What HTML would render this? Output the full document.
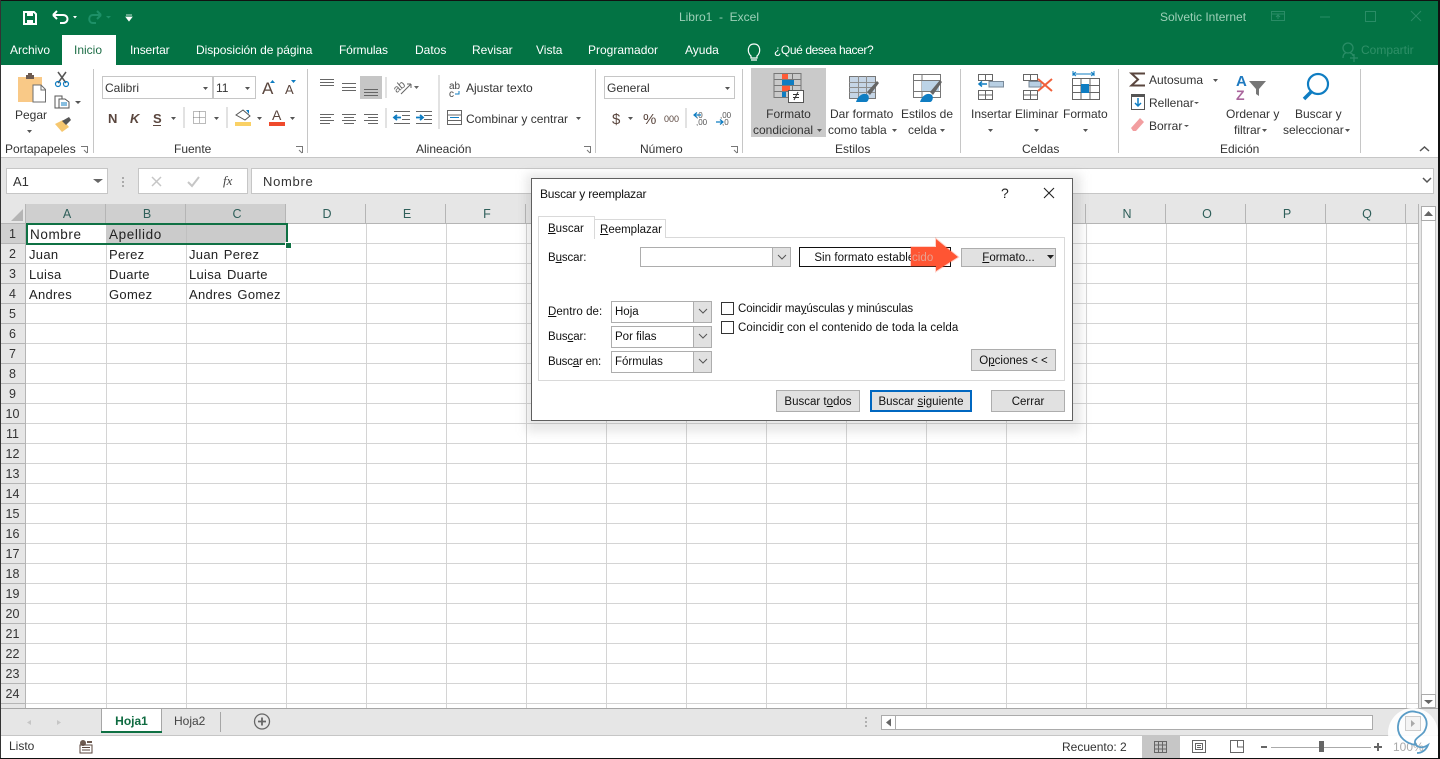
<!DOCTYPE html>
<html lang="es"><head><meta charset="utf-8"><title>Libro1 - Excel</title>
<style>
html,body{margin:0;padding:0;background:#fff}
#p{position:relative;width:1440px;height:759px;overflow:hidden;background:#fff;font-family:"Liberation Sans",sans-serif;font-size:12px;color:#333;letter-spacing:0}
#p div,#p span.t{position:absolute;box-sizing:border-box}
.t{position:absolute;white-space:nowrap;line-height:16px}
.w{color:#fff}
.c{text-align:center}
.r{left:0;width:26px;height:20px;line-height:21px;text-align:center;color:#333;font-size:12.5px;background:#e6e6e6;border-bottom:1px solid #b5b5b5;border-right:1px solid #b5b5b5}
.h{top:204px;height:20px;line-height:20px;text-align:center;padding-left:3px;color:#2f5f5a;font-size:12.5px;background:#e6e6e6;border-right:1px solid #b5b5b5;border-bottom:1px solid #b5b5b5}
.cell{position:absolute;white-space:nowrap;font-size:13px;line-height:22px;color:#222;letter-spacing:.3px;word-spacing:1.5px}
.big{font-size:13.5px;letter-spacing:.6px}
.box{background:#fff;border:1px solid #c6c6c6}
.btn{background:#e1e1e1;border:1px solid #adadad;text-align:center;color:#111;line-height:22px;font-size:11.5px;white-space:nowrap;letter-spacing:0}
.sel{background:#fff;border:1px solid #adadad;font-size:11.5px;color:#111;line-height:19px;padding-left:3px;letter-spacing:0}
.sel i{position:absolute;right:0;top:0;bottom:0;width:17px;background:#e1e1e1;border-left:1px solid #adadad}
.sel svg{position:absolute;right:3px;top:6px}
.d{font-size:11.5px;color:#111;letter-spacing:.05px}
u{text-decoration:underline}
.sep{background:#c6c6c6;width:1px;top:69px;height:84px}
.lb{color:#333;top:141px}
</style></head><body><div id="p">
<!-- green header -->
<div style="left:0;top:0;width:1440px;height:65px;background:#037344"></div>
<div style="left:62px;top:35px;width:54px;height:30px;background:#fff"></div>
<span class="t" style="left:549px;width:340px;text-align:center;top:9px;color:#9ed0b8;display:block">Libro1 &nbsp;-&nbsp; Excel</span>
<span class="t" style="left:1160px;top:9px;color:#9ed0b8">Solvetic Internet</span>
<span class="t w" style="left:10px;top:42px">Archivo</span>
<span class="t" style="left:74px;top:42px;color:#1e6e47">Inicio</span>
<span class="t w" style="left:130px;top:42px;letter-spacing:-.15px">Insertar</span>
<span class="t w" style="left:196px;top:42px;letter-spacing:-.05px">Disposición de página</span>
<span class="t w" style="left:339px;top:42px;letter-spacing:-.15px">Fórmulas</span>
<span class="t w" style="left:415px;top:42px;">Datos</span>
<span class="t w" style="left:472px;top:42px">Revisar</span>
<span class="t w" style="left:536px;top:42px">Vista</span>
<span class="t w" style="left:588px;top:42px">Programador</span>
<span class="t w" style="left:685px;top:42px">Ayuda</span>
<span class="t w" style="left:774px;top:42px;letter-spacing:-.4px">¿Qué desea hacer?</span>
<span class="t" style="left:1361px;top:42px;color:#2f9068">Compartir</span>

<!-- ribbon -->
<div style="left:0;top:65px;width:1440px;height:92px;background:#fff"></div>
<div style="left:0;top:157px;width:1440px;height:47px;background:#e6e6e6;border-top:1px solid #c6c6c6"></div>
<div class="sep" style="left:93px"></div><div class="sep" style="left:307px"></div><div class="sep" style="left:595px"></div><div class="sep" style="left:742px"></div><div class="sep" style="left:960px"></div><div class="sep" style="left:1118px"></div><div class="sep" style="left:1360px"></div>
<div style="left:751px;top:68px;width:75px;height:69px;background:#cacaca"></div>
<div style="left:360px;top:76px;width:22px;height:23px;background:#c6c6c6"></div>
<div class="box" style="left:102px;top:76px;width:111px;height:23px"></div>
<div class="box" style="left:213px;top:76px;width:43px;height:23px"></div>
<div class="box" style="left:604px;top:76px;width:131px;height:23px"></div>
<span class="t" style="left:105px;top:80px">Calibri</span>
<span class="t" style="left:216px;top:80px">11</span>
<span class="t" style="left:607px;top:80px">General</span>
<span class="t" style="left:15px;top:107px">Pegar</span>
<span class="t" style="left:466px;top:80px">Ajustar texto</span>
<span class="t" style="left:466px;top:111px">Combinar y centrar</span>
<span class="t c" style="left:751px;width:75px;top:106px">Formato</span>
<span class="t" style="left:753px;top:122px">condicional</span>
<span class="t" style="left:830px;top:106px">Dar formato</span>
<span class="t" style="left:828px;top:122px">como tabla</span>
<span class="t" style="left:901px;top:106px">Estilos de</span>
<span class="t" style="left:908px;top:122px">celda</span>
<span class="t" style="left:971px;top:106px">Insertar</span>
<span class="t" style="left:1015px;top:106px">Eliminar</span>
<span class="t" style="left:1063px;top:106px">Formato</span>
<span class="t" style="left:1149px;top:72px">Autosuma</span>
<span class="t" style="left:1149px;top:95px">Rellenar</span>
<span class="t" style="left:1149px;top:118px">Borrar</span>
<span class="t" style="left:1226px;top:106px">Ordenar y</span>
<span class="t" style="left:1234px;top:122px">filtrar</span>
<span class="t" style="left:1295px;top:106px">Buscar y</span>
<span class="t" style="left:1283px;top:122px">seleccionar</span>
<span class="t lb" style="left:5px">Portapapeles</span>
<span class="t lb" style="left:174px">Fuente</span>
<span class="t lb" style="left:416px">Alineación</span>
<span class="t lb" style="left:640px">Número</span>
<span class="t lb" style="left:835px">Estilos</span>
<span class="t lb" style="left:1022px">Celdas</span>
<span class="t lb" style="left:1220px">Edición</span>

<!-- formula bar -->
<div class="box" style="left:6px;top:168px;width:102px;height:26px"></div>
<span class="t" style="left:13px;top:174px;font-size:13px">A1</span>
<div class="box" style="left:138px;top:168px;width:110px;height:26px"></div>
<div class="box" style="left:251px;top:168px;width:1183px;height:26px"></div>
<span class="t" style="left:263px;top:174px;font-size:13px;letter-spacing:.7px">Nombre</span>
<span class="t" style="left:223px;top:173px;font:italic 13px 'Liberation Serif',serif;color:#444">fx</span>

<!-- sheet grid -->
<div style="left:26px;top:204px;width:1392px;height:504px;background-color:#fff;background-image:linear-gradient(#d4d4d4 1px,transparent 1px);background-size:100% 20px;background-position:0 19px"></div>
<svg style="position:absolute;left:0;top:0" width="1440" height="759"><g stroke="#d4d4d4" fill="none"><path d="M106.500 204V708M186.500 204V708M286.500 204V708M366.500 204V708M446.500 204V708M526.500 204V708M606.500 204V708M686.500 204V708M766.500 204V708M846.500 204V708M926.500 204V708M1006.500 204V708M1086.500 204V708M1166.500 204V708M1246.500 204V708M1326.500 204V708M1406.500 204V708"/></g></svg>
<div style="left:0;top:204px;width:26px;height:20px;background:#e6e6e6;border-right:1px solid #b5b5b5;border-bottom:1px solid #b5b5b5"></div>
<svg style="position:absolute;left:10px;top:208px" width="14" height="14"><path d="M13 1V13H1Z" fill="#b5b5b5"/></svg>
<div class="h" style="left:26px;width:80px;background:#cfcfcf">A</div>
<div class="h" style="left:106px;width:80px;background:#cfcfcf">B</div>
<div class="h" style="left:186px;width:100px;background:#cfcfcf">C</div>
<div class="h" style="left:286px;width:80px">D</div><div class="h" style="left:366px;width:80px">E</div><div class="h" style="left:446px;width:80px">F</div><div class="h" style="left:526px;width:80px">G</div><div class="h" style="left:606px;width:80px">H</div><div class="h" style="left:686px;width:80px">I</div><div class="h" style="left:766px;width:80px">J</div><div class="h" style="left:846px;width:80px">K</div><div class="h" style="left:926px;width:80px">L</div><div class="h" style="left:1006px;width:80px">M</div><div class="h" style="left:1086px;width:80px">N</div><div class="h" style="left:1166px;width:80px">O</div><div class="h" style="left:1246px;width:80px">P</div><div class="h" style="left:1326px;width:80px">Q</div>
<div style="left:1406px;top:204px;width:12px;height:20px;background:#e6e6e6;border-bottom:1px solid #b5b5b5"></div>
<div class="r" style="top:224px;background:#cfcfcf">1</div><div class="r" style="top:244px">2</div><div class="r" style="top:264px">3</div><div class="r" style="top:284px">4</div><div class="r" style="top:304px">5</div><div class="r" style="top:324px">6</div><div class="r" style="top:344px">7</div><div class="r" style="top:364px">8</div><div class="r" style="top:384px">9</div><div class="r" style="top:404px">10</div><div class="r" style="top:424px">11</div><div class="r" style="top:444px">12</div><div class="r" style="top:464px">13</div><div class="r" style="top:484px">14</div><div class="r" style="top:504px">15</div><div class="r" style="top:524px">16</div><div class="r" style="top:544px">17</div><div class="r" style="top:564px">18</div><div class="r" style="top:584px">19</div><div class="r" style="top:604px">20</div><div class="r" style="top:624px">21</div><div class="r" style="top:644px">22</div><div class="r" style="top:664px">23</div><div class="r" style="top:684px">24</div>
<div style="left:0;top:704px;width:26px;height:4px;background:#e6e6e6;border-right:1px solid #b5b5b5"></div>
<!-- selection -->
<div style="left:106px;top:224px;width:181px;height:19px;background:#cbcbcb"></div>
<div style="left:186px;top:224px;width:1px;height:19px;background:#c0c0c0"></div>
<div style="left:26px;top:223px;width:262px;height:22px;border:2px solid #0f7144"></div>
<div style="left:285px;top:242px;width:5px;height:5px;background:#0f7144;border:1px solid #fff;box-sizing:content-box"></div>
<span class="cell big" style="left:30px;top:224px">Nombre</span><span class="cell big" style="left:109px;top:224px">Apellido</span>
<span class="cell" style="left:29px;top:244px">Juan</span><span class="cell" style="left:109px;top:244px">Perez</span><span class="cell" style="left:189px;top:244px">Juan Perez</span>
<span class="cell" style="left:29px;top:264px">Luisa</span><span class="cell" style="left:109px;top:264px">Duarte</span><span class="cell" style="left:189px;top:264px">Luisa Duarte</span>
<span class="cell" style="left:29px;top:284px">Andres</span><span class="cell" style="left:109px;top:284px">Gomez</span><span class="cell" style="left:189px;top:284px">Andres Gomez</span>

<!-- vertical scrollbar -->
<div style="left:1418px;top:204px;width:20px;height:504px;background:#e6e6e6;border-left:1px solid #b5b5b5"></div>
<div style="left:1421px;top:206px;width:15px;height:502px;background:#fff;border:1px solid #c6c6c6"></div>
<div style="left:1421px;top:206px;width:15px;height:15px;background:#fff;border:1px solid #ababab"></div>
<div style="left:1421px;top:694px;width:15px;height:14px;background:#fff;border:1px solid #ababab"></div>

<!-- sheet tabs -->
<div style="left:0;top:708px;width:1438px;height:28px;background:#e6e6e6;border-top:1px solid #a6a6a6;border-bottom:1px solid #c6c6c6"></div>
<div style="left:101px;top:709px;width:61px;height:24px;background:#fff;border:1px solid #a6a6a6;border-top:0;border-bottom:0"></div>
<div style="left:101px;top:731px;width:61px;height:2px;background:#0f7144"></div>
<span class="t" style="left:101px;width:61px;text-align:center;top:713px;font-weight:bold;color:#0f6b41;display:block">Hoja1</span>
<span class="t" style="left:174px;top:713px;color:#444">Hoja2</span>
<div style="left:220px;top:712px;width:1px;height:20px;background:#a6a6a6"></div>
<div style="left:881px;top:715px;width:492px;height:15px;background:#fff;border:1px solid #ababab"></div>
<div style="left:895px;top:715px;width:1px;height:15px;background:#ababab"></div>
<!-- status bar -->
<div style="left:0;top:736px;width:1438px;height:22px;background:#fff"></div>
<span class="t" style="left:9px;top:738px">Listo</span>
<span class="t" style="left:1062px;top:739px">Recuento: 2</span>
<div style="left:1142px;top:736px;width:38px;height:22px;background:#c6c6c6"></div>

<!-- icon layer -->
<svg style="position:absolute;left:0;top:0" width="1440" height="759" fill="none">
<!-- QAT -->
<g stroke="#fff" stroke-width="2"><path d="M24 12H34L36 14V24H24Z"/></g><path d="M27 12H33V16H27ZM27 20H33V24H27Z" fill="#fff"/>
<path d="M53 15L57 11M53 15L57 19M53 15H63C69 15 69 23 63 23H60" stroke="#fff" stroke-width="2"/><path d="M73 16H77L75 18.500Z" fill="#fff"/>
<path d="M101 15L97 11M101 15L97 19M101 15H93C88 15 88 23 93 23H96" stroke="#1d9067" stroke-width="2"/><path d="M106 16H111L108.500 18.500Z" fill="#1d9067"/>
<path d="M126 15H132M126 17H132L129 21Z" fill="#fff" stroke="#fff" stroke-width=".8"/>
<!-- Window controls -->
<g stroke="#2a8c66"><rect x="1271.500" y="11.500" width="13" height="9"/><path d="M1271 14H1284M1278 19V15M1276 17L1278 15L1280 17"/><path d="M1320 17H1330"/><rect x="1365.500" y="11.500" width="10" height="10"/><path d="M1411 11L1421 21M1421 11L1411 21"/></g>
<circle cx="1348" cy="48" r="5" stroke="#2a8c66" stroke-width="1.300"/><path d="M1343 58C1343 54 1345 53 1346 53M1350 53C1351 53 1353 54 1353 56M1354 54V62M1350 58H1358" stroke="#2a8c66" stroke-width="1.300"/>
<path d="M751 56C747 53 747 44 754 44C761 44 761 53 757 56V58H751ZM751 60H757" stroke="#fff" stroke-width="1.200"/>
<!-- clipboard -->
<path d="M18 77H42V102H18Z" fill="#f9c987"/><path d="M26 75H34V79H26Z" fill="#6d5a50"/><path d="M28 73H32V76H28Z" fill="#6d5a50"/>
<path d="M33 85H41L45.500 89.500V102H33Z" fill="#fff" stroke="#6d6d6d"/><path d="M41 85V90H45.500" stroke="#6d6d6d"/>
<path d="M27 130H32L29.500 133Z" fill="#555"/>
<!-- scissors -->
<path d="M58 72L66 83M66 72L58 83" stroke="#555" stroke-width="1.500"/><circle cx="58" cy="84" r="2.500" stroke="#0f7dc2" stroke-width="1.200"/><circle cx="66" cy="84" r="2.500" stroke="#0f7dc2" stroke-width="1.200"/>
<!-- copy -->
<path d="M55 96H62L62 108H55Z" stroke="#555"/><path d="M59 99H65L69 102V108H59Z" fill="#fff" stroke="#555"/><path d="M61 103H67M61 105H67" stroke="#0f7dc2"/>
<path d="M75 101H81L78 104Z" fill="#555"/>
<!-- brush -->
<path d="M55 124L63 120L69 127L62 132Z" fill="#f6c76f"/><path d="M62 121L69 117L71 120L66 125Z" fill="#555"/>
<!-- font -->
<path d="M203 87H208L205.500 90Z M245 87H250L247.500 90Z" fill="#555"/>
<text x="262" y="94" font-family="Liberation Sans" font-size="17" fill="#5a463e">A</text><text x="285" y="94" font-family="Liberation Sans" font-size="13" fill="#5a463e">A</text>
<path d="M270 83L272.500 80L275 83Z M291 80H296L293.500 83Z" fill="#0f7dc2"/>
<text x="108" y="123" font-family="Liberation Sans" font-size="13" font-weight="bold" fill="#5a463e">N</text>
<text x="130" y="123" font-family="Liberation Sans" font-size="13" font-weight="bold" font-style="italic" fill="#5a463e">K</text>
<text x="153" y="123" font-family="Liberation Sans" font-size="13" font-weight="bold" fill="#5a463e">S</text><path d="M153 125.500H161" stroke="#5a463e"/>
<path d="M171 117H176L173.500 120Z M214 117H219L216.500 120Z M257 117H262L259.500 120Z M290 117H295L292.500 120Z" fill="#555"/>
<path d="M184 107V128M227 107V128M386 77V98M386 108V128M439 75V129" stroke="#c6c6c6"/>
<path d="M193.500 111.500H205.500V123.500H193.500ZM199.500 111.500V123.500M193.500 117.500H205.500" stroke="#777" stroke-dasharray="1 1"/>
<path d="M236 115L243 110L250 116L245 120Z" stroke="#555" fill="#fff"/><path d="M246 110H249V114Z" fill="#0f7dc2"/><rect x="235" y="122" width="16" height="4" fill="#fad165"/>
<text x="272" y="120" font-family="Liberation Sans" font-size="14" fill="#5a463e">A</text><rect x="269" y="122" width="16" height="4" fill="#ef4a2c"/>
<!-- alignment -->
<g stroke="#666"><path d="M320 79.500H334M320 82.500H334M320 85.500H334M342 83.500H356M342 87.500H356M342 90.500H356M364 89.500H378M364 92.500H378M364 95.500H378"/>
<path d="M320 114.500H334M320 117.500H331M320 120.500H334M320 123.500H330M342 114.500H356M344 117.500H354M342 120.500H356M344 123.500H354M364 114.500H378M368 117.500H378M364 120.500H378M368 123.500H378"/>
<path d="M394 111.500H410M402 115.500H410M402 119.500H410M394 123.500H410M416 111.500H432M424 115.500H432M424 119.500H432M416 123.500H432"/></g>
<path d="M394 117.500H401M397 115L394 117.500L397 120M416 117.500H423M420 115L423 117.500L420 120" stroke="#0f7dc2" stroke-width="1.800"/>
<text x="394" y="90" font-family="Liberation Sans" font-size="11" fill="#666" transform="rotate(-40 400 88)">ab</text><path d="M401 94L411 84M411 84H407M411 84V88" stroke="#666"/>
<path d="M414 86H419L416.500 89Z" fill="#666"/>
<text x="449" y="89" font-family="Liberation Sans" font-size="10" fill="#444">ab</text><text x="449" y="97" font-family="Liberation Sans" font-size="10" fill="#444">c</text><path d="M459 91V94H455" stroke="#0f7dc2"/>
<rect x="447.500" y="110.500" width="14" height="14" stroke="#666"/><path d="M447 115H461M447 120.500H461" stroke="#666"/><path d="M450 117.500H459" stroke="#0f7dc2"/>
<path d="M576 117H581L578.500 120Z M725 87H730L727.500 90Z" fill="#555"/>
<!-- number -->
<text x="612" y="124" font-family="Liberation Sans" font-size="15" fill="#5a463e">$</text><path d="M628 117H633L630.500 120Z" fill="#555"/>
<text x="643" y="124" font-family="Liberation Sans" font-size="15" fill="#5a463e">%</text><text x="664" y="122" font-family="Liberation Sans" font-size="9" fill="#5a463e">000</text>
<path d="M686 108V128" stroke="#c6c6c6"/>
<text x="696" y="118" font-family="Liberation Sans" font-size="8" fill="#555">,0</text><text x="696" y="125" font-family="Liberation Sans" font-size="8" fill="#555">,00</text>
<text x="720" y="118" font-family="Liberation Sans" font-size="8" fill="#555">,00</text><text x="722" y="125" font-family="Liberation Sans" font-size="8" fill="#555">,0</text>
<path d="M694 115H701M697 112.500L694 115L697 117.500M716 122H723M720 119.500L723 122L720 124.500" stroke="#0f7dc2" stroke-width="1.200"/>
<!-- estilos -->
<path d="M774 73.500H801V97.500H774ZM774 79.500H801M774 85.500H801M774 91.500H801M782.500 73V97M792.500 73V97" stroke="#777"/>
<rect x="782" y="74" width="6" height="5" fill="#ff5a36"/><rect x="782" y="80" width="12" height="5" fill="#0f7dc2"/><rect x="782" y="86" width="8" height="5" fill="#ff5a36"/><rect x="782" y="92" width="4" height="5" fill="#0f7dc2"/>
<rect x="788.500" y="90.500" width="15" height="12" fill="#fff" stroke="#555"/><path d="M793 94.500H799M793 97.500H799M798 92L794 100" stroke="#333"/>
<path d="M849.500 76.500H875.500V98.500H849.500Z" stroke="#777"/><rect x="850" y="77" width="25" height="21" fill="#c5d5e6"/><path d="M849 82.500H875M849 87.500H875M849 92.500H875M858.500 76V98M866.500 76V98" stroke="#8d8d8d"/>
<path d="M867 92L877 81L879 83L870 95Z" fill="#666"/><path d="M856 102C858 95 864 92 868 95C870 98 868 102 866 102Z" fill="#0f7dc2"/>
<path d="M913.500 74.500H940.500V97.500H913.500ZM922 74V97M913 80.500H940M913 91.500H940" stroke="#777"/><rect x="922" y="81" width="17" height="10" fill="#bcd3e6"/>
<path d="M930 92L940 80L942 82L933 95Z" fill="#666"/><path d="M920 102C922 95 928 92 932 95C934 98 932 102 930 102Z" fill="#0f7dc2"/>
<!-- celdas -->
<g stroke="#666"><path d="M978.500 74.500H992.500V80.500H978.500ZM985.500 74V80M978.500 90.500H992.500V99.500H978.500ZM985.500 90V99M978 95H992"/><path d="M1023.500 74.500H1037.500V80.500H1023.500ZM1030.500 74V80M1023.500 90.500H1037.500V99.500H1023.500ZM1030.500 90V99M1023 95H1037"/><path d="M1072.500 78.500H1099.500V99.500H1072.500ZM1081 78V99M1090 78V99M1072 85.500H1099M1072 92.500H1099"/></g>
<rect x="989" y="81.500" width="14.500" height="5.500" fill="#b8cfe3" stroke="#7a8a9a"/><path d="M979 84H987M982 81.500L979 84L982 86.500" stroke="#0f7dc2" stroke-width="1.500"/>
<rect x="1029" y="81.500" width="12" height="5.500" fill="#b8cfe3" stroke="#7a8a9a"/><path d="M1038 79L1052 91M1052 79L1038 91" stroke="#f0603a" stroke-width="2"/>
<rect x="1081" y="84" width="8" height="9" fill="#0f7dc2"/><path d="M1073 74H1094M1073 71V76M1094 71V76M1076 72L1073 74L1076 76M1091 72L1094 74L1091 76" stroke="#0f7dc2"/>
<path d="M988 129H993L990.500 132Z M1034 129H1039L1036.500 132Z M1083 129H1088L1085.500 132Z M817 129H822L819.500 132Z M892 129H897L894.500 132Z M940 129H945L942.500 132Z M1262 129H1267L1264.500 132Z M1345 129H1350L1347.500 132Z M1213 79H1218L1215.500 82Z M1194 102H1199L1196.500 104Z M1184 125H1189L1186.500 127Z" fill="#555"/>
<!-- edicion -->
<path d="M1145 73.500H1131.500L1138 79.500L1131.500 85.500H1145" stroke="#5a463e" stroke-width="2"/>
<rect x="1131.500" y="94.500" width="13" height="15" fill="#fff" stroke="#555"/><rect x="1131" y="94" width="14" height="3" fill="#555"/><path d="M1138 98V106M1135 103L1138 106L1141 103" stroke="#0f7dc2" stroke-width="1.500"/>
<path d="M1131 128L1140 118L1144 122L1136 131L1133 131Z" fill="#f29ea0"/>
<text x="1236" y="86" font-family="Liberation Sans" font-size="15" font-weight="bold" fill="#1f7ac0">A</text><text x="1236" y="100" font-family="Liberation Sans" font-size="14" font-weight="bold" fill="#a9659c">Z</text>
<path d="M1249 81H1266L1259 89V96L1256 94V89Z" fill="#777"/>
<circle cx="1318" cy="84" r="10" stroke="#0f7dc2" stroke-width="2.200"/><path d="M1311 92L1304 99" stroke="#0f7dc2" stroke-width="3.500"/>
<path d="M1420 151L1424.500 147L1429 151" stroke="#555" stroke-width="1.500"/>
<path d="M81 146.500H87.500V153M84 150L87 153" stroke="#777"/><path d="M296 146.500H302.500V153M299 150L302 153" stroke="#777"/><path d="M584 146.500H590.500V153M587 150L590 153" stroke="#777"/><path d="M731 146.500H737.500V153M734 150L737 153" stroke="#777"/>
<!-- formula bar -->
<path d="M93 179H103L98 183Z" fill="#666"/><path d="M123 177V179M123 181V183M123 185V187" stroke="#aaa" stroke-width="2"/>
<path d="M152 177L161 186M161 177L152 186" stroke="#c6c6c6" stroke-width="1.500"/><path d="M188 182L192 186L199 177" stroke="#c6c6c6" stroke-width="2"/>
<path d="M1423 178L1427 182L1431 178" stroke="#555" stroke-width="1.500"/>
<!-- scroll arrows -->
<path d="M1424 216L1428.500 211L1433 216Z M1424 700H1433L1428.500 704Z" fill="#666"/>
<path d="M31 720L27 722.500L31 725ZM57 720L61 722.500L57 725Z" fill="#c6c6c6"/>
<circle cx="262" cy="721.500" r="7.500" stroke="#666" stroke-width="1.300"/><path d="M258 721.500H266M262 717.500V725.500" stroke="#666" stroke-width="1.800"/>
<path d="M866 717V719M866 721V723M866 725V727" stroke="#b0b0b0" stroke-width="2"/>
<path d="M891 718.500L886 722.500L891 726.500Z" fill="#666"/>
<!-- status -->
<circle cx="83" cy="743" r="3" fill="#6d5a50"/><rect x="87" y="741" width="5" height="2" fill="#6d5a50"/><path d="M80 745H92V753H80ZM82 747.500H90M82 750H90" stroke="#5a463e"/>
<path d="M1154.500 741.500H1166.500V752.500H1154.500ZM1158.500 741V752M1162.500 741V752M1154 745H1166M1154 749H1166" stroke="#666"/>
<path d="M1192.500 740.500H1205.500V752.500H1192.500Z" stroke="#666"/><path d="M1195.500 743.500H1202.500V749.500H1195.500ZM1197 745.500H1201M1197 747.500H1201" stroke="#666"/>
<path d="M1230.500 740.500H1243.500V752.500H1230.500ZM1237.500 740V747H1243" stroke="#666"/>
<path d="M1261 747H1267" stroke="#666" stroke-width="2"/><path d="M1271 747.500H1371" stroke="#aaa"/><rect x="1319" y="741" width="5" height="11" fill="#666"/><path d="M1374 747H1382M1378 743V751" stroke="#666" stroke-width="2"/>
</svg>

<!-- watermark -->
<div style="left:1388px;top:708px;width:50px;height:50px;border-radius:50%;background:rgba(255,255,255,.9)"></div>
<span class="t" style="left:1393px;top:739px;color:#aaa">100%</span>
<svg style="position:absolute;left:1380px;top:700px" width="60" height="59" fill="none"><rect x="25.500" y="16.500" width="15" height="14" fill="#f4f4f4" stroke="#ccc"/><path d="M31 20L35 23.500L31 27Z" fill="#aaa"/><path d="M36 45C28 44 17 38 18 26C19 14 30 10 36 12C45 13 50 22 44 32C40 37 32 39 36 45C40 49 45 47 48 45C46 50 42 53 37 53" stroke="#5a9cc6" stroke-width="1.800"/></svg>

<!-- dialog -->
<div style="left:526px;top:174px;width:555px;height:258px;background:rgba(120,120,120,.18);filter:blur(5px)"></div>
<div style="left:531px;top:178px;width:542px;height:243px;background:#fff;border:1px solid #5f5f5f"></div>
<span class="t d" style="left:540px;top:186px;font-size:12px;letter-spacing:-.2px">Buscar y reemplazar</span>
<span class="t" style="left:1001px;top:185px;font-size:14px;color:#222">?</span>
<svg style="position:absolute;left:1043px;top:187px" width="12" height="12"><path d="M1 1L11 11M11 1L1 11" stroke="#222" stroke-width="1.100"/></svg>
<div style="left:538px;top:237px;width:527px;height:144px;border:1px solid #d9d9d9"></div>
<div style="left:594px;top:219px;width:72px;height:19px;background:#fff;border:1px solid #d9d9d9;border-bottom:0"></div>
<div style="left:538px;top:216px;width:57px;height:23px;background:#fff;border:1px solid #d9d9d9;border-bottom:0"></div>
<span class="t d" style="left:548px;top:221px;letter-spacing:0"><u>B</u>uscar</span>
<span class="t d" style="left:600px;top:222px;letter-spacing:0"><u>R</u>eemplazar</span>
<span class="t d" style="left:548px;top:250px;letter-spacing:-.1px">B<u>u</u>scar:</span>
<div class="sel" style="left:640px;top:247px;width:151px;height:20px"><i></i><svg width="10" height="7"><path d="M1 1L5 5L9 1" stroke="#555" fill="none"/></svg></div>
<div style="left:799px;top:247px;width:152px;height:20px;border:1px solid #111;background:#fff"></div>
<span class="t d c" style="left:799px;width:152px;top:250px;display:block">Sin formato establecido</span>
<div class="btn" style="left:961px;top:248px;width:95px;height:19px;line-height:18px"><u>F</u>ormato...</div>
<svg style="position:absolute;left:1047px;top:255px" width="8" height="5"><path d="M0 0H7L3.500 4Z" fill="#222"/></svg>
<span class="t d" style="left:548px;top:304px"><u>D</u>entro de:</span>
<span class="t d" style="left:548px;top:329px;letter-spacing:-.1px">Bus<u>c</u>ar:</span>
<span class="t d" style="left:548px;top:354px;letter-spacing:-.2px">Busc<u>a</u>r en:</span>
<div class="sel" style="left:611px;top:301px;width:101px;height:22px;line-height:20px"><i></i><svg width="10" height="7"><path d="M1 1L5 5L9 1" stroke="#555" fill="none"/></svg>Hoja</div>
<div class="sel" style="left:611px;top:326px;width:101px;height:22px;line-height:20px"><i></i><svg width="10" height="7"><path d="M1 1L5 5L9 1" stroke="#555" fill="none"/></svg>Por filas</div>
<div class="sel" style="left:611px;top:351px;width:101px;height:22px;line-height:20px"><i></i><svg width="10" height="7"><path d="M1 1L5 5L9 1" stroke="#555" fill="none"/></svg>Fórmulas</div>
<div style="left:721px;top:302px;width:13px;height:13px;border:1px solid #333;background:#fff"></div>
<div style="left:721px;top:321px;width:13px;height:13px;border:1px solid #333;background:#fff"></div>
<span class="t d" style="left:738px;top:301px;letter-spacing:-.1px">Coincidir ma<u>y</u>úsculas y minúsculas</span>
<span class="t d" style="left:738px;top:320px;letter-spacing:.1px">Coincidi<u>r</u> con el contenido de toda la celda</span>
<div class="btn" style="left:971px;top:349px;width:85px;height:22px">O<u>p</u>ciones &lt; &lt;</div>
<div class="btn" style="left:776px;top:390px;width:84px;height:22px">Buscar t<u>o</u>dos</div>
<div class="btn" style="left:870px;top:390px;width:102px;height:22px;border:2px solid #0067c0;line-height:20px">Buscar <u>s</u>iguiente</div>
<div class="btn" style="left:991px;top:390px;width:74px;height:22px">Cerrar</div>
<svg style="position:absolute;left:905px;top:234px" width="60" height="42"><path d="M6 13H31V5L53 23L31 37V32H6Z" fill="#ff5533" opacity=".25" stroke="#ff5533" stroke-width="2"/><path d="M6 13H31V5L53 23L31 37V32H6Z" fill="#ff5533"/></svg>
<span class="t d" style="left:912px;top:250px;color:#e8a090">cido</span>

<!-- window edge -->
<div style="left:0;top:0;width:1440px;height:1px;background:#111"></div>
<div style="left:0;top:0;width:1px;height:759px;background:#333"></div>
<div style="left:1438px;top:0;width:2px;height:759px;background:#111"></div>
<div style="left:0;top:758px;width:1440px;height:1px;background:#111"></div>
</div></body></html>
